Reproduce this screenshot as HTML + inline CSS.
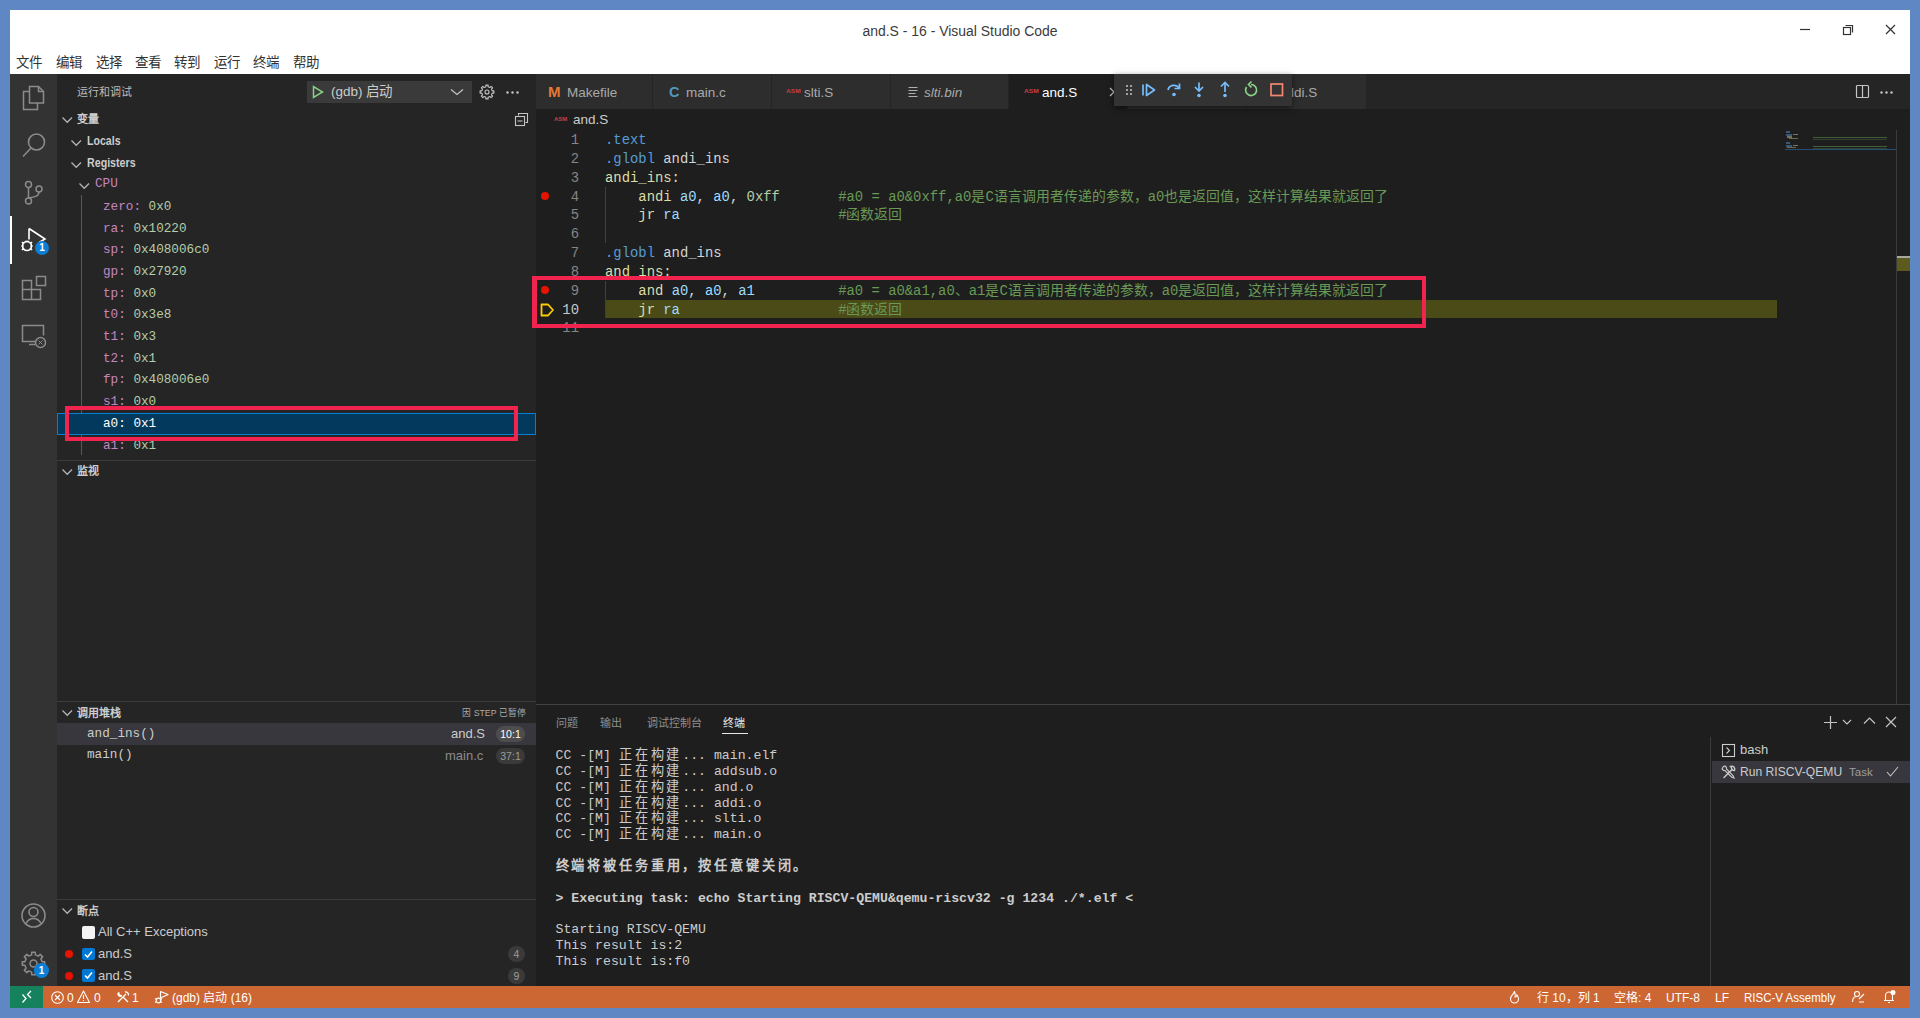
<!DOCTYPE html>
<html lang="zh-CN"><head><meta charset="utf-8">
<style>
*{margin:0;padding:0;box-sizing:border-box}
html,body{width:1920px;height:1018px;overflow:hidden;background:#5f87c4;font-family:"Liberation Sans",sans-serif}
.a{position:absolute;white-space:pre}
.m{font-family:"Liberation Mono",monospace}
#title{position:absolute;left:10px;top:10px;width:1900px;height:64px;background:#fff}
#act{position:absolute;left:10px;top:74px;width:47px;height:912px;background:#333333}
#side{position:absolute;left:57px;top:74px;width:479px;height:912px;background:#252526}
#tabs{position:absolute;left:536px;top:74px;width:1374px;height:35px;background:#252526}
#editor{position:absolute;left:536px;top:109px;width:1374px;height:595px;background:#1e1e1e}
#panel{position:absolute;left:536px;top:704px;width:1374px;height:282px;background:#1e1e1e;border-top:1px solid #414141}
#status{position:absolute;left:10px;top:986px;width:1900px;height:22px;background:#cc6633}
#remote{position:absolute;left:10px;top:986px;width:33px;height:22px;background:#16825d}
.menu{top:55px;height:16px;line-height:16px;font-size:13.5px;color:#333}
svg{position:absolute;overflow:visible}
</style></head><body>
<div id="title"></div>
<div id="act"></div>
<div id="side"></div>
<div id="tabs"></div>
<div id="editor"></div>
<div id="panel"></div>
<div id="status"></div>
<div id="remote"></div>

<div class="a" style="left:0;width:1920px;text-align:center;top:22px;height:18px;line-height:18px;font-size:15.5px;color:#3b3b3b;transform:scaleX(0.9)">and.S - 16 - Visual Studio Code</div>
<div class="a menu" style="left:16px">文件</div>
<div class="a menu" style="left:56px">编辑</div>
<div class="a menu" style="left:96px">选择</div>
<div class="a menu" style="left:135px">查看</div>
<div class="a menu" style="left:174px">转到</div>
<div class="a menu" style="left:214px">运行</div>
<div class="a menu" style="left:253px">终端</div>
<div class="a menu" style="left:293px">帮助</div>
<svg style="left:1800px;top:24px" width="12" height="12"><line x1="0" y1="5.5" x2="10" y2="5.5" stroke="#333" stroke-width="1.2"/></svg>
<svg style="left:1842px;top:24px" width="12" height="12"><rect x="1.5" y="3.5" width="7" height="7" fill="none" stroke="#333" stroke-width="1.2"/><path d="M3.5 1.5h7v7" fill="none" stroke="#333" stroke-width="1.2"/></svg>
<svg style="left:1885px;top:24px" width="12" height="12"><path d="M1 1L10 10M10 1L1 10" stroke="#333" stroke-width="1.2"/></svg>

<div class="a" style="left:10px;top:216px;width:2px;height:48px;background:#fff"></div>
<svg style="left:22px;top:85px" width="24" height="26" fill="none" stroke="#8b8b8b" stroke-width="1.5">
<path d="M7.5 1.5h9l5 5v11.5h-14z"/><path d="M16.5 1.5v5h5"/><path d="M7.5 6.5h-6v18h14v-6.5"/></svg>
<svg style="left:21px;top:132px" width="26" height="26" fill="none" stroke="#8b8b8b" stroke-width="1.6">
<circle cx="15.5" cy="10" r="8"/><path d="M10 16L2 24.5"/></svg>
<svg style="left:22px;top:179px" width="22" height="26" fill="none" stroke="#8b8b8b" stroke-width="1.5">
<circle cx="6.5" cy="5.5" r="3"/><circle cx="17" cy="10" r="3"/><circle cx="6.5" cy="22" r="3"/><path d="M6.5 8.5v10.5"/><path d="M17 13c0 4-4 5-10.5 6"/></svg>
<svg style="left:20px;top:226px" width="30" height="30" fill="none" stroke="#ffffff" stroke-width="1.6">
<path d="M9 2.5v11M9 2.5l16 10.5-6 3.5"/>
<circle cx="7" cy="20" r="4.5" fill="#333"/><path d="M2 16l2 2M12 16l-2 2M1.5 20h2M12.5 20h-2M2 24l2-2M12 24l-2-2M5 15.5h4"/></svg>
<div class="a" style="left:35px;top:241px;width:14px;height:14px;border-radius:7px;background:#0b7fd6;color:#fff;font-size:10px;line-height:14px;text-align:center;font-weight:bold">1</div>
<svg style="left:21px;top:275px" width="26" height="27" fill="none" stroke="#8b8b8b" stroke-width="1.5">
<path d="M1.5 5.5h9v9h9v10h-18z"/><path d="M1.5 14.5h9v10"/><rect x="15.5" y="1.5" width="9" height="9"/></svg>
<svg style="left:21px;top:323px" width="27" height="27" fill="none" stroke="#8b8b8b" stroke-width="1.5">
<path d="M14 18.5h-12.5v-16h21v10"/><path d="M8 21.5h6"/><circle cx="19.5" cy="19.5" r="5" /><path d="M17.5 21.5l4-4M21.5 21.5l-4-4" stroke-width="1"/></svg>
<svg style="left:20px;top:902px" width="28" height="28" fill="none" stroke="#8b8b8b" stroke-width="1.6">
<circle cx="13.5" cy="13.5" r="11.5"/><circle cx="13.5" cy="10" r="4.5"/><path d="M6 21.5c2-4 4.5-5 7.5-5s5.5 1 7.5 5"/></svg>
<svg style="left:21px;top:951px" width="26" height="26" fill="none" stroke="#8b8b8b" stroke-width="1.5" stroke-linejoin="round"><path d="M21.10 10.65 L23.66 10.71 L23.66 14.29 L21.10 14.35 L19.89 17.27 L21.65 19.12 L19.12 21.65 L17.27 19.89 L14.35 21.10 L14.29 23.66 L10.71 23.66 L10.65 21.10 L7.73 19.89 L5.88 21.65 L3.35 19.12 L5.11 17.27 L3.90 14.35 L1.34 14.29 L1.34 10.71 L3.90 10.65 L5.11 7.73 L3.35 5.88 L5.88 3.35 L7.73 5.11 L10.65 3.90 L10.71 1.34 L14.29 1.34 L14.35 3.90 L17.27 5.11 L19.12 3.35 L21.65 5.88 L19.89 7.73Z"/><circle cx="12.5" cy="12.5" r="3.5"/></svg>
<div class="a" style="left:34px;top:963px;width:15px;height:15px;border-radius:8px;background:#0b7fd6;color:#fff;font-size:10px;line-height:15px;text-align:center;font-weight:bold">1</div>


<div class="a" style="left:77px;top:84px;height:16px;line-height:16px;font-size:11px;color:#bbbbbb">运行和调试</div>
<div class="a" style="left:307px;top:81px;width:165px;height:22px;background:#3a3a3a"></div>
<svg style="left:312px;top:85px" width="12" height="14" fill="none" stroke="#89d185" stroke-width="1.5"><path d="M1.5 1.5v11l9-5.5z"/></svg>
<div class="a" style="left:331px;top:83px;height:18px;line-height:18px;font-size:13.5px;color:#cccccc">(gdb) 启动</div>
<svg style="left:450px;top:88px" width="14" height="8" fill="none" stroke="#c5c5c5" stroke-width="1.2"><path d="M1 1.5l6 5 6-5"/></svg>
<svg style="left:479px;top:84px" width="16" height="16" fill="none" stroke="#c5c5c5" stroke-width="1.1" stroke-linejoin="round"><path d="M13.18 6.88 L14.91 6.89 L14.91 9.11 L13.18 9.12 L12.45 10.87 L13.67 12.10 L12.10 13.67 L10.87 12.45 L9.12 13.18 L9.11 14.91 L6.89 14.91 L6.88 13.18 L5.13 12.45 L3.90 13.67 L2.33 12.10 L3.55 10.87 L2.82 9.12 L1.09 9.11 L1.09 6.89 L2.82 6.88 L3.55 5.13 L2.33 3.90 L3.90 2.33 L5.13 3.55 L6.88 2.82 L6.89 1.09 L9.11 1.09 L9.12 2.82 L10.87 3.55 L12.10 2.33 L13.67 3.90 L12.45 5.13Z"/><circle cx="8" cy="8" r="2"/></svg>
<svg style="left:506px;top:91px" width="14" height="3" fill="#c5c5c5"><circle cx="1.5" cy="1.5" r="1.2"/><circle cx="6.5" cy="1.5" r="1.2"/><circle cx="11.5" cy="1.5" r="1.2"/></svg>

<svg style="left:62px;top:116px" width="11" height="8" fill="none" stroke="#b4b4b4" stroke-width="1.3"><path d="M0.5 1.5l4.75 4.75 4.75-4.75"/></svg>
<div class="a" style="left:77px;top:111px;height:16px;line-height:16px;font-size:11px;font-weight:bold;color:#cccccc">变量</div>
<svg style="left:514px;top:112px" width="16" height="16" fill="none" stroke="#c5c5c5" stroke-width="1.1"><path d="M4.5 3.5v-2h9v9h-2"/><rect x="1.5" y="4.5" width="9" height="9"/><path d="M3.5 9h5"/></svg>
<svg style="left:71px;top:139px" width="11" height="8" fill="none" stroke="#b4b4b4" stroke-width="1.3"><path d="M0.5 1.5l4.75 4.75 4.75-4.75"/></svg>
<div class="a" style="left:87px;top:132px;height:18px;line-height:18px;font-size:12.75px;font-weight:bold;color:#cccccc;transform-origin:0 50%;transform:scaleX(0.83)">Locals</div>
<svg style="left:71px;top:161px" width="11" height="8" fill="none" stroke="#b4b4b4" stroke-width="1.3"><path d="M0.5 1.5l4.75 4.75 4.75-4.75"/></svg>
<div class="a" style="left:87px;top:154px;height:18px;line-height:18px;font-size:12.75px;font-weight:bold;color:#cccccc;transform-origin:0 50%;transform:scaleX(0.836)">Registers</div>
<svg style="left:79px;top:182px" width="11" height="8" fill="none" stroke="#b4b4b4" stroke-width="1.3"><path d="M0.5 1.5l4.75 4.75 4.75-4.75"/></svg>
<div class="a m" style="left:95px;top:175px;height:18px;line-height:18px;font-size:12.67px;color:#c586c0">CPU</div>
<div class="a" style="left:81px;top:195px;width:1px;height:260px;background:#585858"></div>
<div class="a m" style="left:103px;top:197.8px;height:18px;line-height:18px;font-size:12.67px;color:#c586c0">zero:<span style="color:#b5cea8"> 0x0</span></div>
<div class="a m" style="left:103px;top:219.5px;height:18px;line-height:18px;font-size:12.67px;color:#c586c0">ra:<span style="color:#b5cea8"> 0x10220</span></div>
<div class="a m" style="left:103px;top:241.2px;height:18px;line-height:18px;font-size:12.67px;color:#c586c0">sp:<span style="color:#b5cea8"> 0x408006c0</span></div>
<div class="a m" style="left:103px;top:262.9px;height:18px;line-height:18px;font-size:12.67px;color:#c586c0">gp:<span style="color:#b5cea8"> 0x27920</span></div>
<div class="a m" style="left:103px;top:284.6px;height:18px;line-height:18px;font-size:12.67px;color:#c586c0">tp:<span style="color:#b5cea8"> 0x0</span></div>
<div class="a m" style="left:103px;top:306.3px;height:18px;line-height:18px;font-size:12.67px;color:#c586c0">t0:<span style="color:#b5cea8"> 0x3e8</span></div>
<div class="a m" style="left:103px;top:328.0px;height:18px;line-height:18px;font-size:12.67px;color:#c586c0">t1:<span style="color:#b5cea8"> 0x3</span></div>
<div class="a m" style="left:103px;top:349.7px;height:18px;line-height:18px;font-size:12.67px;color:#c586c0">t2:<span style="color:#b5cea8"> 0x1</span></div>
<div class="a m" style="left:103px;top:371.4px;height:18px;line-height:18px;font-size:12.67px;color:#c586c0">fp:<span style="color:#b5cea8"> 0x408006e0</span></div>
<div class="a m" style="left:103px;top:393.1px;height:18px;line-height:18px;font-size:12.67px;color:#c586c0">s1:<span style="color:#b5cea8"> 0x0</span></div>
<div class="a" style="left:57px;top:412.8px;width:479px;height:22px;background:#04395e;border:1px solid #007fd4"></div>
<div class="a m" style="left:103px;top:414.8px;height:18px;line-height:18px;font-size:12.67px;color:#ffffff">a0: 0x1</div>
<div class="a m" style="left:103px;top:436.5px;height:18px;line-height:18px;font-size:12.67px;color:#c586c0">a1:<span style="color:#b5cea8"> 0x1</span></div>
<div class="a" style="left:57px;top:460px;width:479px;height:1px;background:#3c3c3c"></div>
<svg style="left:62px;top:468px" width="11" height="8" fill="none" stroke="#b4b4b4" stroke-width="1.3"><path d="M0.5 1.5l4.75 4.75 4.75-4.75"/></svg>
<div class="a" style="left:77px;top:463px;height:16px;line-height:16px;font-size:11px;font-weight:bold;color:#cccccc">监视</div>
<div class="a" style="left:57px;top:701px;width:479px;height:1px;background:#3c3c3c"></div>
<svg style="left:62px;top:709px" width="11" height="8" fill="none" stroke="#b4b4b4" stroke-width="1.3"><path d="M0.5 1.5l4.75 4.75 4.75-4.75"/></svg>
<div class="a" style="left:77px;top:705px;height:16px;line-height:16px;font-size:11px;font-weight:bold;color:#cccccc">调用堆栈</div>
<div class="a" style="left:462px;top:706px;height:14px;line-height:14px;font-size:9.5px;transform-origin:0 50%;transform:scaleX(0.92);color:#aaaaaa">因 STEP 已暂停</div>
<div class="a" style="left:57px;top:723px;width:479px;height:22px;background:#37373d"></div>
<div class="a m" style="left:87px;top:725px;height:18px;line-height:18px;font-size:12.67px;color:#cccccc">and_ins()</div>
<div class="a" style="left:451px;top:725px;height:18px;line-height:18px;font-size:13px;color:#cccccc">and.S</div>
<div class="a" style="left:496px;top:726px;width:29px;height:16px;border-radius:8px;background:#4d4d4d;color:#ffffff;font-size:10.5px;line-height:16px;text-align:center">10:1</div>
<div class="a m" style="left:87px;top:746px;height:18px;line-height:18px;font-size:12.67px;color:#cccccc">main()</div>
<div class="a" style="left:445px;top:747px;height:18px;line-height:18px;font-size:13px;color:#8b8b8b">main.c</div>
<div class="a" style="left:496px;top:748px;width:29px;height:16px;border-radius:8px;background:#3a3a3a;color:#9d9d9d;font-size:10.5px;line-height:16px;text-align:center">37:1</div>
<div class="a" style="left:57px;top:899px;width:479px;height:1px;background:#3c3c3c"></div>
<svg style="left:62px;top:907px" width="11" height="8" fill="none" stroke="#b4b4b4" stroke-width="1.3"><path d="M0.5 1.5l4.75 4.75 4.75-4.75"/></svg>
<div class="a" style="left:77px;top:903px;height:16px;line-height:16px;font-size:11px;font-weight:bold;color:#cccccc">断点</div>
<div class="a" style="left:82px;top:926px;width:12.5px;height:12.5px;border-radius:2px;background:#f3f3f3"></div>
<div class="a" style="left:98px;top:923px;height:18px;line-height:18px;font-size:13px;color:#cccccc">All C++ Exceptions</div>
<div class="a" style="left:65px;top:950px;width:8px;height:8px;border-radius:4px;background:#e51400"></div>
<div class="a" style="left:82px;top:947.75px;width:12.5px;height:12.5px;border-radius:2px;background:#0078d4"></div>
<svg style="left:82px;top:947.75px" width="13" height="13" fill="none" stroke="#fff" stroke-width="1.6"><path d="M3 6.5l2.5 2.5 4.5-5.5"/></svg>
<div class="a" style="left:98px;top:945px;height:18px;line-height:18px;font-size:13px;color:#cccccc">and.S</div>
<div class="a" style="left:508px;top:946px;width:17px;height:16px;border-radius:8px;background:#3a3a3a;color:#9d9d9d;font-size:10.5px;line-height:16px;text-align:center">4</div>
<div class="a" style="left:65px;top:971.5px;width:8px;height:8px;border-radius:4px;background:#e51400"></div>
<div class="a" style="left:82px;top:969.25px;width:12.5px;height:12.5px;border-radius:2px;background:#0078d4"></div>
<svg style="left:82px;top:969.25px" width="13" height="13" fill="none" stroke="#fff" stroke-width="1.6"><path d="M3 6.5l2.5 2.5 4.5-5.5"/></svg>
<div class="a" style="left:98px;top:966.5px;height:18px;line-height:18px;font-size:13px;color:#cccccc">and.S</div>
<div class="a" style="left:508px;top:967.5px;width:17px;height:16px;border-radius:8px;background:#3a3a3a;color:#9d9d9d;font-size:10.5px;line-height:16px;text-align:center">9</div>
<div class="a" style="left:536px;top:74px;width:116px;height:35px;background:#2d2d2d"></div>
<div class="a" style="left:653px;top:74px;width:118px;height:35px;background:#2d2d2d"></div>
<div class="a" style="left:772px;top:74px;width:118px;height:35px;background:#2d2d2d"></div>
<div class="a" style="left:891px;top:74px;width:117px;height:35px;background:#2d2d2d"></div>
<div class="a" style="left:1009px;top:74px;width:118px;height:35px;background:#1e1e1e"></div>
<div class="a" style="left:1128px;top:74px;width:118px;height:35px;background:#2d2d2d"></div>
<div class="a" style="left:1247px;top:74px;width:119px;height:35px;background:#2d2d2d"></div>
<div class="a" style="left:548px;top:83px;height:18px;line-height:18px;font-size:15px;font-weight:bold;color:#e37933">M</div>
<div class="a" style="left:567px;top:84px;height:18px;line-height:18px;font-size:13.5px;color:#a9a9a9;">Makefile</div>
<div class="a" style="left:669px;top:83px;height:18px;line-height:18px;font-size:14.5px;font-weight:bold;color:#519aba">C</div>
<div class="a" style="left:686px;top:84px;height:18px;line-height:18px;font-size:13.5px;color:#a9a9a9;">main.c</div>
<div class="a" style="left:786px;top:86px;height:10px;line-height:10px;font-size:5.5px;font-weight:bold;color:#cc3e44;transform-origin:0 50%;transform:scaleX(1.2)">ASM</div>
<div class="a" style="left:804px;top:84px;height:18px;line-height:18px;font-size:13.5px;color:#a9a9a9;">slti.S</div>
<svg style="left:908px;top:86px" width="11" height="11" stroke="#b0b0b0" stroke-width="1.2"><path d="M0.5 1.5h9M0.5 4.5h9M0.5 7.5h7M0.5 10.5h9"/></svg>
<div class="a" style="left:924px;top:84px;height:18px;line-height:18px;font-size:13.5px;color:#a9a9a9;font-style:italic">slti.bin</div>
<div class="a" style="left:1024px;top:86px;height:10px;line-height:10px;font-size:5.5px;font-weight:bold;color:#cc3e44;transform-origin:0 50%;transform:scaleX(1.2)">ASM</div>
<div class="a" style="left:1042px;top:84px;height:18px;line-height:18px;font-size:13.5px;color:#ffffff;">and.S</div>
<svg style="left:1109px;top:87px" width="10" height="10" fill="none" stroke="#c5c5c5" stroke-width="1.3"><path d="M1 1l8 8M9 1L1 9"/></svg>
<div class="a" style="left:1261px;top:86px;height:10px;line-height:10px;font-size:5.5px;font-weight:bold;color:#cc3e44;transform-origin:0 50%;transform:scaleX(1.2)">ASM</div>
<div class="a" style="left:1279px;top:84px;height:18px;line-height:18px;font-size:13.5px;color:#a9a9a9;">addi.S</div>
<svg style="left:1855px;top:84px" width="15" height="15" fill="none" stroke="#c5c5c5" stroke-width="1.2"><rect x="1.5" y="1.5" width="12" height="12" rx="1"/><path d="M7.5 1.5v12"/></svg>
<svg style="left:1880px;top:91px" width="14" height="3" fill="#c5c5c5"><circle cx="1.5" cy="1.5" r="1.2"/><circle cx="6.5" cy="1.5" r="1.2"/><circle cx="11.5" cy="1.5" r="1.2"/></svg>
<div class="a" style="left:1114px;top:74px;width:178px;height:32px;background:#333333;box-shadow:0 2px 6px rgba(0,0,0,0.55)"></div>
<svg style="left:1125px;top:84px" width="9" height="12" fill="#a0a0a0"><rect x="1" y="1" width="2" height="2"/><rect x="5" y="1" width="2" height="2"/><rect x="1" y="5" width="2" height="2"/><rect x="5" y="5" width="2" height="2"/><rect x="1" y="9" width="2" height="2"/><rect x="5" y="9" width="2" height="2"/></svg>
<svg style="left:1140px;top:82px" width="18" height="16" fill="none" stroke="#75beff" stroke-width="1.7"><path d="M3 2.5v11"/><path d="M6.5 2.5v11l8-5.5z" stroke-linejoin="round"/></svg>
<svg style="left:1165px;top:81px" width="18" height="17" fill="none" stroke="#75beff" stroke-width="1.7"><path d="M3 9c1-5 8-6.5 11-2"/><path d="M14.5 2.5v5h-5"/><circle cx="9" cy="13.5" r="1.8" fill="#75beff" stroke="none"/></svg>
<svg style="left:1191px;top:81px" width="16" height="18" fill="none" stroke="#75beff" stroke-width="1.7"><path d="M8 1.5v8"/><path d="M4 6l4 4 4-4"/><circle cx="8" cy="14.5" r="1.8" fill="#75beff" stroke="none"/></svg>
<svg style="left:1217px;top:81px" width="16" height="18" fill="none" stroke="#75beff" stroke-width="1.7"><path d="M8 11v-9"/><path d="M4 5.5l4-4 4 4"/><circle cx="8" cy="14.5" r="1.8" fill="#75beff" stroke="none"/></svg>
<svg style="left:1242px;top:81px" width="18" height="18" fill="none" stroke="#89d185" stroke-width="1.7"><path d="M4.5 6a5.5 5.5 0 1 0 4.5-2.5"/><path d="M9.5 0.5l-3 3 3 3"/></svg>
<svg style="left:1269px;top:82px" width="16" height="16" fill="none" stroke="#f48771" stroke-width="1.7"><rect x="2" y="2" width="11.5" height="11.5"/></svg>
<div class="a" style="left:554px;top:114px;height:10px;line-height:10px;font-size:5px;font-weight:bold;color:#cc3e44;transform-origin:0 50%;transform:scaleX(1.2)">ASM</div>
<div class="a" style="left:573px;top:111px;height:18px;line-height:18px;font-size:13.5px;color:#cccccc">and.S</div>
<div class="a" style="left:605px;top:299.55px;width:1172px;height:18.83px;background:#4b4b18"></div>
<div class="a" style="left:605px;top:186.58px;width:1px;height:56.49px;background:#404040"></div>
<div class="a" style="left:605px;top:280.72px;width:1px;height:37.66px;background:#404040"></div>
<div class="a m" style="left:549px;width:30px;text-align:right;top:131.09px;height:18.83px;line-height:18.83px;font-size:13.88px;color:#858585">1</div>
<div class="a m" style="left:605px;top:131.09px;height:18.83px;line-height:18.83px;font-size:13.88px;color:#d4d4d4"><span style="color:#569cd6">.text</span></div>
<div class="a m" style="left:549px;width:30px;text-align:right;top:149.91px;height:18.83px;line-height:18.83px;font-size:13.88px;color:#858585">2</div>
<div class="a m" style="left:605px;top:149.91px;height:18.83px;line-height:18.83px;font-size:13.88px;color:#d4d4d4"><span style="color:#569cd6">.globl</span><span style="color:#d4d4d4"> andi_ins</span></div>
<div class="a m" style="left:549px;width:30px;text-align:right;top:168.75px;height:18.83px;line-height:18.83px;font-size:13.88px;color:#858585">3</div>
<div class="a m" style="left:605px;top:168.75px;height:18.83px;line-height:18.83px;font-size:13.88px;color:#d4d4d4"><span style="color:#dcdcaa">andi_ins:</span></div>
<div class="a m" style="left:549px;width:30px;text-align:right;top:187.58px;height:18.83px;line-height:18.83px;font-size:13.88px;color:#858585">4</div>
<div class="a m" style="left:605px;top:187.58px;height:18.83px;line-height:18.83px;font-size:13.88px;color:#d4d4d4"><span style="color:#dcdcaa">    andi </span><span style="color:#9cdcfe">a0</span><span style="color:#d4d4d4">, </span><span style="color:#9cdcfe">a0</span><span style="color:#d4d4d4">, </span><span style="color:#b5cea8">0xff</span>       <span style="color:#6a9955">#a0 = a0&amp;0xff,a0是C语言调用者传递的参数，a0也是返回值，这样计算结果就返回了</span></div>
<div class="a m" style="left:549px;width:30px;text-align:right;top:206.41px;height:18.83px;line-height:18.83px;font-size:13.88px;color:#858585">5</div>
<div class="a m" style="left:605px;top:206.41px;height:18.83px;line-height:18.83px;font-size:13.88px;color:#d4d4d4"><span style="color:#dcdcaa">    jr </span><span style="color:#9cdcfe">ra</span>                   <span style="color:#6a9955">#函数返回</span></div>
<div class="a m" style="left:549px;width:30px;text-align:right;top:225.23px;height:18.83px;line-height:18.83px;font-size:13.88px;color:#858585">6</div>
<div class="a m" style="left:549px;width:30px;text-align:right;top:244.06px;height:18.83px;line-height:18.83px;font-size:13.88px;color:#858585">7</div>
<div class="a m" style="left:605px;top:244.06px;height:18.83px;line-height:18.83px;font-size:13.88px;color:#d4d4d4"><span style="color:#569cd6">.globl</span><span style="color:#d4d4d4"> and_ins</span></div>
<div class="a m" style="left:549px;width:30px;text-align:right;top:262.89px;height:18.83px;line-height:18.83px;font-size:13.88px;color:#858585">8</div>
<div class="a m" style="left:605px;top:262.89px;height:18.83px;line-height:18.83px;font-size:13.88px;color:#d4d4d4"><span style="color:#dcdcaa">and_ins:</span></div>
<div class="a m" style="left:549px;width:30px;text-align:right;top:281.72px;height:18.83px;line-height:18.83px;font-size:13.88px;color:#858585">9</div>
<div class="a m" style="left:605px;top:281.72px;height:18.83px;line-height:18.83px;font-size:13.88px;color:#d4d4d4"><span style="color:#dcdcaa">    and </span><span style="color:#9cdcfe">a0</span><span style="color:#d4d4d4">, </span><span style="color:#9cdcfe">a0</span><span style="color:#d4d4d4">, </span><span style="color:#9cdcfe">a1</span>          <span style="color:#6a9955">#a0 = a0&amp;a1,a0、a1是C语言调用者传递的参数，a0是返回值，这样计算结果就返回了</span></div>
<div class="a m" style="left:549px;width:30px;text-align:right;top:300.55px;height:18.83px;line-height:18.83px;font-size:13.88px;color:#c6c6c6">10</div>
<div class="a m" style="left:605px;top:300.55px;height:18.83px;line-height:18.83px;font-size:13.88px;color:#d4d4d4"><span style="color:#dcdcaa">    jr </span><span style="color:#9cdcfe">ra</span>                   <span style="color:#6a9955">#函数返回</span></div>
<div class="a m" style="left:549px;width:30px;text-align:right;top:319.38px;height:18.83px;line-height:18.83px;font-size:13.88px;color:#858585">11</div>
<div class="a" style="left:541px;top:191.99px;width:8px;height:8px;border-radius:4px;background:#e51400"></div>
<div class="a" style="left:541px;top:286.14px;width:8px;height:8px;border-radius:4px;background:#e51400"></div>
<svg style="left:539.5px;top:302.97px" width="15" height="14" fill="none" stroke="#ffcc00" stroke-width="1.8"><path d="M1.5 1.5h6.5l5 5.5-5 5.5h-6.5z" stroke-linejoin="round"/></svg>
<div class="a" style="left:1896px;top:130px;width:1px;height:574px;background:#3a3a3a"></div>
<div class="a" style="left:1897px;top:256px;width:13px;height:15px;background:#5c5a1c"></div>
<div class="a" style="left:1897px;top:256px;width:13px;height:2px;background:#a8a8a0"></div>
<div style="position:absolute;left:0;top:0;opacity:0.6">
<div class="a" style="left:1786px;top:131px;width:4px;height:2px;background:#4a7fb0"></div>
<div class="a" style="left:1786px;top:134px;width:6px;height:2px;background:#4a7fb0"></div>
<div class="a" style="left:1793px;top:134px;width:5px;height:1px;background:#aaaaaa"></div>
<div class="a" style="left:1787px;top:136px;width:5px;height:2px;background:#a8a890"></div>
<div class="a" style="left:1789px;top:138px;width:9px;height:1px;background:#a0a070"></div>
<div class="a" style="left:1813px;top:137px;width:74px;height:1px;background:#5a8a48"></div>
<div class="a" style="left:1813px;top:139px;width:74px;height:1px;background:#3c5a34"></div>
<div class="a" style="left:1786px;top:142px;width:4px;height:2px;background:#4a7fb0"></div>
<div class="a" style="left:1786px;top:145px;width:6px;height:2px;background:#4a7fb0"></div>
<div class="a" style="left:1793px;top:145px;width:5px;height:1px;background:#aaaaaa"></div>
<div class="a" style="left:1787px;top:147px;width:9px;height:1px;background:#a0a070"></div>
<div class="a" style="left:1813px;top:146px;width:74px;height:1px;background:#5a8a48"></div>
<div class="a" style="left:1813px;top:148px;width:74px;height:1px;background:#3c5a34"></div>
</div>
<div class="a" style="left:1785px;top:149px;width:111px;height:1px;background:#264f78"></div>
<div class="a" style="left:556px;top:715px;height:16px;line-height:16px;font-size:11px;color:#8f8f8f">问题</div>
<div class="a" style="left:600px;top:715px;height:16px;line-height:16px;font-size:11px;color:#8f8f8f">输出</div>
<div class="a" style="left:647px;top:715px;height:16px;line-height:16px;font-size:11px;color:#8f8f8f">调试控制台</div>
<div class="a" style="left:723px;top:715px;height:16px;line-height:16px;font-size:11px;color:#e7e7e7">终端</div>
<div class="a" style="left:722px;top:733px;width:26px;height:1px;background:#e7e7e7"></div>
<svg style="left:1823px;top:715px" width="15" height="15" fill="none" stroke="#c5c5c5" stroke-width="1.2"><path d="M7.5 1v13M1 7.5h13"/></svg>
<svg style="left:1842px;top:719px" width="10" height="6" fill="none" stroke="#c5c5c5" stroke-width="1.1"><path d="M1 1l4 4 4-4"/></svg>
<svg style="left:1863px;top:717px" width="13" height="8" fill="none" stroke="#c5c5c5" stroke-width="1.2"><path d="M1 6.5l5.5-5.5 5.5 5.5"/></svg>
<svg style="left:1885px;top:716px" width="12" height="12" fill="none" stroke="#c5c5c5" stroke-width="1.2"><path d="M1 1l10 10M11 1L1 11"/></svg>
<div class="a m" style="left:555.5px;top:748.09px;height:15.83px;line-height:15.83px;font-size:13.2px;color:#cccccc;">CC -[M] <span style="display:inline-block;width:15.86px">正</span><span style="display:inline-block;width:15.86px">在</span><span style="display:inline-block;width:15.86px">构</span><span style="display:inline-block;width:15.86px">建</span>... main.elf</div>
<div class="a m" style="left:555.5px;top:763.92px;height:15.83px;line-height:15.83px;font-size:13.2px;color:#cccccc;">CC -[M] <span style="display:inline-block;width:15.86px">正</span><span style="display:inline-block;width:15.86px">在</span><span style="display:inline-block;width:15.86px">构</span><span style="display:inline-block;width:15.86px">建</span>... addsub.o</div>
<div class="a m" style="left:555.5px;top:779.75px;height:15.83px;line-height:15.83px;font-size:13.2px;color:#cccccc;">CC -[M] <span style="display:inline-block;width:15.86px">正</span><span style="display:inline-block;width:15.86px">在</span><span style="display:inline-block;width:15.86px">构</span><span style="display:inline-block;width:15.86px">建</span>... and.o</div>
<div class="a m" style="left:555.5px;top:795.58px;height:15.83px;line-height:15.83px;font-size:13.2px;color:#cccccc;">CC -[M] <span style="display:inline-block;width:15.86px">正</span><span style="display:inline-block;width:15.86px">在</span><span style="display:inline-block;width:15.86px">构</span><span style="display:inline-block;width:15.86px">建</span>... addi.o</div>
<div class="a m" style="left:555.5px;top:811.41px;height:15.83px;line-height:15.83px;font-size:13.2px;color:#cccccc;">CC -[M] <span style="display:inline-block;width:15.86px">正</span><span style="display:inline-block;width:15.86px">在</span><span style="display:inline-block;width:15.86px">构</span><span style="display:inline-block;width:15.86px">建</span>... slti.o</div>
<div class="a m" style="left:555.5px;top:827.24px;height:15.83px;line-height:15.83px;font-size:13.2px;color:#cccccc;">CC -[M] <span style="display:inline-block;width:15.86px">正</span><span style="display:inline-block;width:15.86px">在</span><span style="display:inline-block;width:15.86px">构</span><span style="display:inline-block;width:15.86px">建</span>... main.o</div>
<div class="a m" style="left:555.5px;top:858.89px;height:15.83px;line-height:15.83px;font-size:13.2px;color:#cccccc;font-weight:bold;"><span style="display:inline-block;width:15.86px">终</span><span style="display:inline-block;width:15.86px">端</span><span style="display:inline-block;width:15.86px">将</span><span style="display:inline-block;width:15.86px">被</span><span style="display:inline-block;width:15.86px">任</span><span style="display:inline-block;width:15.86px">务</span><span style="display:inline-block;width:15.86px">重</span><span style="display:inline-block;width:15.86px">用</span><span style="display:inline-block;width:15.86px">，</span><span style="display:inline-block;width:15.86px">按</span><span style="display:inline-block;width:15.86px">任</span><span style="display:inline-block;width:15.86px">意</span><span style="display:inline-block;width:15.86px">键</span><span style="display:inline-block;width:15.86px">关</span><span style="display:inline-block;width:15.86px">闭</span><span style="display:inline-block;width:15.86px">。</span></div>
<div class="a m" style="left:555.5px;top:890.56px;height:15.83px;line-height:15.83px;font-size:13.2px;color:#cccccc;font-weight:bold;">&gt; Executing task: echo Starting RISCV-QEMU&amp;qemu-riscv32 -g 1234 ./*.elf &lt;</div>
<div class="a m" style="left:555.5px;top:922.22px;height:15.83px;line-height:15.83px;font-size:13.2px;color:#cccccc;">Starting RISCV-QEMU</div>
<div class="a m" style="left:555.5px;top:938.05px;height:15.83px;line-height:15.83px;font-size:13.2px;color:#cccccc;">This result is:2</div>
<div class="a m" style="left:555.5px;top:953.88px;height:15.83px;line-height:15.83px;font-size:13.2px;color:#cccccc;">This result is:f0</div>
<div class="a" style="left:1710px;top:737px;width:1px;height:249px;background:#3c3c3c"></div>
<svg style="left:1721px;top:743px" width="15" height="15" fill="none" stroke="#cccccc" stroke-width="1.1"><rect x="1.5" y="1.5" width="12" height="12"/><path d="M5.5 4.5l3 3-3 3"/></svg>
<div class="a" style="left:1740px;top:741px;height:18px;line-height:18px;font-size:13px;color:#cccccc">bash</div>
<div class="a" style="left:1712px;top:761px;width:198px;height:22px;background:#37373d"></div>
<svg style="left:1721px;top:764px" width="16" height="16" fill="none" stroke="#cccccc" stroke-width="1.4" stroke-linecap="round"><path d="M3 13.5l7.5-7.5"/><path d="M9.5 2.5a3 3 0 0 1 4 4l-1.5-.2-1.3-1.3-.2-1.5z"/><path d="M2.5 2.5l1.5-.5 1.5 1.5v1.5l6.5 6.5 1 2.5-2.5-1-6.5-6.5h-1.5l-1.5-1.5z" stroke-width="1.1"/></svg>
<div class="a" style="left:1740px;top:763px;height:18px;line-height:18px;font-size:13px;color:#cccccc;transform-origin:0 50%;transform:scaleX(0.93)">Run RISCV-QEMU</div>
<div class="a" style="left:1849px;top:764px;height:16px;line-height:16px;font-size:11.5px;color:#9d9d9d">Task</div>
<svg style="left:1886px;top:766px" width="13" height="11" fill="none" stroke="#c5c5c5" stroke-width="1.1"><path d="M1 6l3.5 4 7.5-9"/></svg>
<svg style="left:20px;top:989px" width="14" height="16" fill="none" stroke="#ffffff" stroke-width="1.3"><path d="M2.5 5.5l3.5 4-3.5 4M11 2l-3.5 3.5 3.5 3.5"/></svg>
<svg style="left:51px;top:991px" width="14" height="14" fill="none" stroke="#ffffff" stroke-width="1.1"><circle cx="6.5" cy="6.5" r="5.8"/><path d="M4 4l5 5M9 4l-5 5"/></svg>
<div class="a" style="left:67px;top:990px;height:16px;line-height:16px;font-size:12px;color:#ffffff">0</div>
<svg style="left:77px;top:990px" width="14" height="14" fill="none" stroke="#ffffff" stroke-width="1.1"><path d="M6.5 1l6 11.5h-12z" stroke-linejoin="round"/><path d="M6.5 5v4M6.5 10v1"/></svg>
<div class="a" style="left:94px;top:990px;height:16px;line-height:16px;font-size:12px;color:#ffffff">0</div>
<svg style="left:116px;top:990px" width="14" height="14" fill="none" stroke="#ffffff" stroke-width="1.3"><path d="M2 12l8-8M3 2a2.5 2.5 0 0 0 3 3.5M2 3a2.5 2.5 0 0 0 3.5 3M12 12L7.5 7.5M9 2a3 3 0 0 1 3.5 3.5"/></svg>
<div class="a" style="left:132px;top:990px;height:16px;line-height:16px;font-size:12px;color:#ffffff">1</div>
<svg style="left:154px;top:989px" width="16" height="16" fill="none" stroke="#ffffff" stroke-width="1.2"><path d="M6.5 2.5v6.5l7.5-3.5z" stroke-linejoin="round"/><circle cx="4.5" cy="11.5" r="2.3"/><path d="M1 9.5l1.3.8M1 13.5l1.3-.8M8 9.5l-1.3.8M8 13.5l-1.3-.8"/></svg>
<div class="a" style="left:172px;top:990px;height:16px;line-height:16px;font-size:12px;color:#ffffff">(gdb) 启动 (16)</div>
<svg style="left:1508px;top:990px" width="13" height="15" fill="none" stroke="#ffffff" stroke-width="1.1"><path d="M6.5 1c0 3-4 4-4 8a4 4 0 0 0 8 0c0-2-1-3-1.5-4-.5 2-1.5 2-2 2 1-2-.5-4-.5-6z"/></svg>
<div class="a" style="left:1537px;top:990px;height:16px;line-height:16px;font-size:12px;color:#ffffff">行 10，列 1</div>
<div class="a" style="left:1614px;top:990px;height:16px;line-height:16px;font-size:12px;color:#ffffff">空格: 4</div>
<div class="a" style="left:1666px;top:990px;height:16px;line-height:16px;font-size:12px;color:#ffffff">UTF-8</div>
<div class="a" style="left:1715px;top:990px;height:16px;line-height:16px;font-size:12px;color:#ffffff">LF</div>
<div class="a" style="left:1744px;top:990px;height:16px;line-height:16px;font-size:12px;color:#ffffff;transform-origin:0 50%;transform:scaleX(0.96)">RISC-V Assembly</div>
<svg style="left:1851px;top:990px" width="15" height="14" fill="none" stroke="#ffffff" stroke-width="1.1"><circle cx="6" cy="4" r="2.5"/><path d="M1.5 12c0-4 2-5.5 4.5-5.5M8 9l5-5M8 12h5"/></svg>
<svg style="left:1882px;top:989px" width="15" height="15" fill="none" stroke="#ffffff" stroke-width="1.1"><path d="M2 11.5h10M3.5 11.5v-5a3.5 3.5 0 0 1 7 0v5M6 13.5h2"/><circle cx="11" cy="3.5" r="2.5" fill="#ffffff" stroke="none"/></svg>
<div class="a" style="left:532px;top:276px;width:894px;height:51.5px;border:4.5px solid #f0244e;border-left-width:5px"></div>
<div class="a" style="left:65px;top:406px;width:453px;height:35px;border:4.5px solid #f0244e"></div>
</body></html>
